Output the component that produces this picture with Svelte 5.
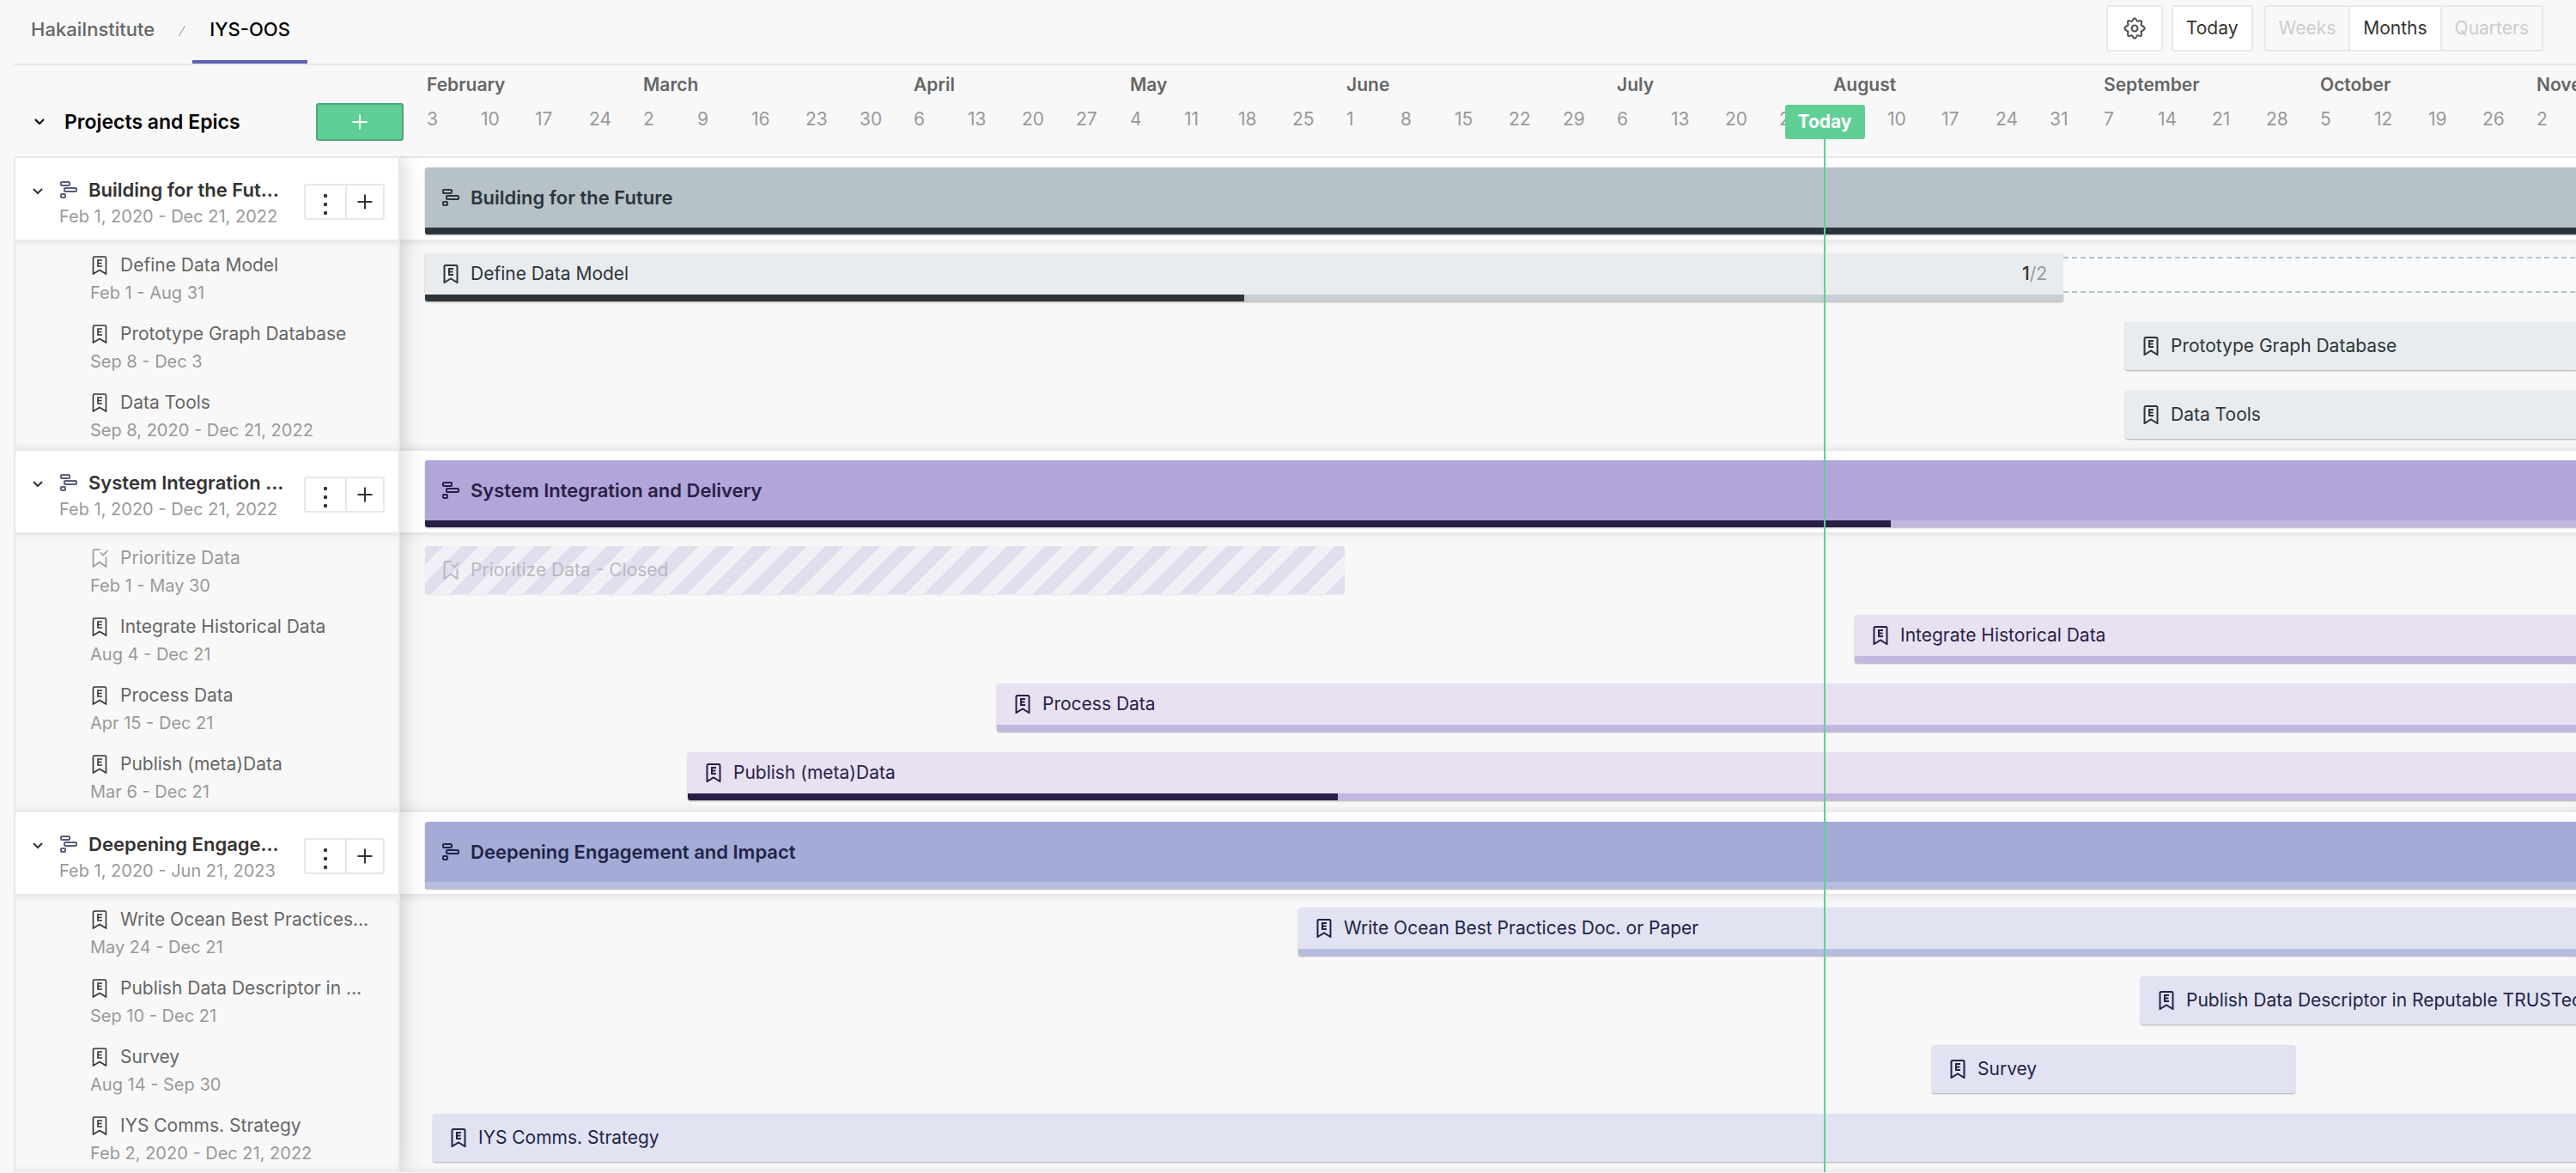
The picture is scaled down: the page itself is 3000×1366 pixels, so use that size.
<script>
  const DAY = 9;
  const LEAD = 29;
  const ORIGIN = Date.UTC(2020, 1, 1);

  const offset = (date) => LEAD + DAY * Math.round((Date.parse(date + 'T00:00:00Z') - ORIGIN) / 86400000);
  const span = (from, to) => offset(to) - offset(from);

  const months = [
    { name: 'February', weeks: [3, 10, 17, 24] },
    { name: 'March', weeks: [2, 9, 16, 23, 30] },
    { name: 'April', weeks: [6, 13, 20, 27] },
    { name: 'May', weeks: [4, 11, 18, 25] },
    { name: 'June', weeks: [1, 8, 15, 22, 29] },
    { name: 'July', weeks: [6, 13, 20, 27] },
    { name: 'August', weeks: [3, 10, 17, 24, 31] },
    { name: 'September', weeks: [7, 14, 21, 28] },
    { name: 'October', weeks: [5, 12, 19, 26] },
    { name: 'November', weeks: [2] }
  ];

  const projects = [
    {
      name: 'Building for the Future', tone: 'slate', from: '2020-02-01', to: '2022-12-21',
      dates: 'Feb 1, 2020 - Dec 21, 2022', done: 100,
      epics: [
        { name: 'Define Data Model', dates: 'Feb 1 - Aug 31', from: '2020-02-01', to: '2020-08-31', done: 50, count: [1, 2], overrun: '2022-12-21' },
        { name: 'Prototype Graph Database', dates: 'Sep 8 - Dec 3', from: '2020-09-08', to: '2020-12-03' },
        { name: 'Data Tools', dates: 'Sep 8, 2020 - Dec 21, 2022', from: '2020-09-08', to: '2022-12-21' }
      ]
    },
    {
      name: 'System Integration and Delivery', tone: 'violet', from: '2020-02-01', to: '2022-12-21',
      dates: 'Feb 1, 2020 - Dec 21, 2022', done: 18,
      epics: [
        { name: 'Prioritize Data', dates: 'Feb 1 - May 30', from: '2020-02-01', to: '2020-05-30', closed: true },
        { name: 'Integrate Historical Data', dates: 'Aug 4 - Dec 21', from: '2020-08-04', to: '2020-12-21', done: 0 },
        { name: 'Process Data', dates: 'Apr 15 - Dec 21', from: '2020-04-15', to: '2020-12-21', done: 0 },
        { name: 'Publish (meta)Data', dates: 'Mar 6 - Dec 21', from: '2020-03-06', to: '2020-12-21', done: 29 }
      ]
    },
    {
      name: 'Deepening Engagement and Impact', tone: 'blue', from: '2020-02-01', to: '2023-06-21',
      dates: 'Feb 1, 2020 - Jun 21, 2023', done: 0,
      epics: [
        { name: 'Write Ocean Best Practices Doc. or Paper', dates: 'May 24 - Dec 21', from: '2020-05-24', to: '2020-12-21', done: 0 },
        { name: 'Publish Data Descriptor in Reputable TRUSTed Repository', dates: 'Sep 10 - Dec 21', from: '2020-09-10', to: '2020-12-21' },
        { name: 'Survey', dates: 'Aug 14 - Sep 30', from: '2020-08-14', to: '2020-09-30' },
        { name: 'IYS Comms. Strategy', dates: 'Feb 2, 2020 - Dec 21, 2022', from: '2020-02-02', to: '2022-12-21' }
      ]
    }
  ];

  const scales = ['Weeks', 'Months', 'Quarters'];
  let scale = $state('Months');
</script>

{#snippet chevron()}
  <svg class="chevron" viewBox="0 0 14 10" aria-hidden="true"><path d="M2 2l5 5 5-5" /></svg>
{/snippet}

{#snippet plus()}
  <svg class="plus" viewBox="0 0 18 18" aria-hidden="true"><path d="M9 0.5v17M0.5 9h17" /></svg>
{/snippet}

{#snippet projectIcon()}
  <svg class="icon" viewBox="0 0 22 22" aria-hidden="true">
    <rect x="2" y="2" width="10" height="4" rx="1" />
    <rect x="6" y="9" width="14" height="4" rx="1" />
    <rect x="2" y="16" width="5" height="4" rx="1" />
  </svg>
{/snippet}

{#snippet epicIcon(closed)}
  <svg class="icon" viewBox="0 0 22 22" aria-hidden="true">
    {#if closed}
      <path d="M12 1H5q-1.500 0-1.500 1.500V21l7.500-5.500 7.500 5.500V9.500" />
      <path d="M12 4.500l3 3L20.500 2" />
    {:else}
      <path d="M5 1h12q1.500 0 1.500 1.500V21L11 16.500 3.500 21V2.500Q3.500 1 5 1z" />
      <path d="M14 5H9v7h5M9 8.500h4.500" />
    {/if}
  </svg>
{/snippet}

<div class="page">
  <header class="topbar">
    <nav class="crumbs" aria-label="Breadcrumb">
      <a href="#workspace">HakaiInstitute</a>
      <svg class="slash" viewBox="0 0 10 14" aria-hidden="true"><path d="M1.500 13L8.500 1" /></svg>
      <a class="current" href="#roadmap" aria-current="page">IYS-OOS</a>
    </nav>
    <div class="controls">
      <button class="control gear" aria-label="Settings">
        <svg viewBox="0 0 24 24" aria-hidden="true">
          <circle cx="12" cy="12" r="3.200" />
          <path d="M12 1.200c1.900 0 1.700 2.600 2.900 3.100 1.200.5 2.900-1.500 4.200-.1 1.400 1.400-.6 3-.1 4.200.5 1.200 3.800 1.300 3.800 3.600s-3.300 2.400-3.800 3.600c-.5 1.200 1.500 2.800.1 4.200-1.300 1.400-3-.6-4.200-.1-1.200.5-1 3.100-2.900 3.100s-1.700-2.600-2.900-3.100c-1.200-.5-2.900 1.500-4.200.1-1.400-1.400.6-3 .1-4.200-.5-1.200-3.800-1.300-3.800-3.600s3.300-2.400 3.800-3.600c.5-1.200-1.500-2.800-.1-4.200 1.300-1.400 3 .6 4.200.1 1.200-.5 1-3.100 2.900-3.100z" />
        </svg>
      </button>
      <button class="control">Today</button>
      <div class="scales" role="group" aria-label="Time scale">
        {#each scales as s}
          <button class:active={scale === s} aria-pressed={scale === s} onclick={() => (scale = s)}>{s}</button>
        {/each}
      </div>
    </div>
  </header>

  <main class="roadmap">
    <section class="side">
      <div class="side-head">
        <button class="toggle" aria-label="Collapse all">{@render chevron()}</button>
        <h1>Projects and Epics</h1>
        <button class="add" aria-label="Add project">{@render plus()}</button>
      </div>
      <div class="panel">
        {#each projects as p}
          <div class="project">
            <button class="toggle" aria-label="Collapse {p.name}">{@render chevron()}</button>
            <div class="project-text">
              <h2>{@render projectIcon()}<span>{p.name}</span></h2>
              <p>{p.dates}</p>
            </div>
            <div class="actions">
              <button aria-label="More actions">
                <svg class="dots" viewBox="0 0 6 26" aria-hidden="true"><circle cx="3" cy="3" r="2.200" /><circle cx="3" cy="13" r="2.200" /><circle cx="3" cy="23" r="2.200" /></svg>
              </button>
              <button aria-label="Add epic">{@render plus()}</button>
            </div>
          </div>
          <ul class="epics">
            {#each p.epics as e}
              <li class="epic" class:closed={e.closed}>
                <h3>{@render epicIcon(e.closed)}<span>{e.name}</span></h3>
                <p>{e.dates}</p>
              </li>
            {/each}
          </ul>
        {/each}
      </div>
    </section>

    <section class="timeline">
      <div class="scale-head">
        {#each months as m}
          <div class="month">
            <strong>{m.name}</strong>
            <div class="weeks">
              {#each m.weeks as w}<span>{w}</span>{/each}
            </div>
          </div>
        {/each}
      </div>
      {#each projects as p}
        <div class="lane project-lane {p.tone}">
          <div class="bar" style:margin-left="{offset(p.from)}px" style:width="{span(p.from, p.to)}px">
            <div class="label">{@render projectIcon()}<span>{p.name}</span></div>
            <div class="track"><div class="fill" style:width="{p.done}%"></div></div>
          </div>
        </div>
        <div class="epic-lanes {p.tone}">
          {#each p.epics as e}
            <div class="lane">
              <div class="bar" class:closed={e.closed} style:margin-left="{offset(e.from)}px" style:width="{span(e.from, e.to)}px">
                <div class="label">
                  {@render epicIcon(e.closed)}<span>{e.name}{e.closed ? ' - Closed' : ''}</span>
                  {#if e.count}<span class="count"><b>{e.count[0]}</b>/{e.count[1]}</span>{/if}
                </div>
                {#if e.done !== undefined}
                  <div class="track"><div class="fill" style:width="{e.done}%"></div></div>
                {/if}
              </div>
              {#if e.overrun}<div class="overrun" style:width="{span(e.to, e.overrun)}px"></div>{/if}
            </div>
          {/each}
        </div>
      {/each}
      <div class="today" style:left="{offset('2020-07-31')}px"><span>Today</span></div>
    </section>
  </main>
</div>

<style>
  :global(body) { background: #f8f8f8; }
  .page {
    padding-left: 16px;
    font-family: Inter, sans-serif;
    font-size: 21px;
    line-height: 28px;
    color: #333;
    overflow: hidden;
  }
  h1, h2, h3, p, ul { margin: 0; padding: 0; font-size: inherit; }
  button { font: inherit; color: inherit; background: none; border: 0; padding: 0; margin: 0; cursor: pointer; }
  svg { display: block; fill: none; stroke: currentColor; stroke-width: 2; flex: none; }

  .topbar { display: flex; justify-content: space-between; height: 74px; border-bottom: 2px solid #e8e8e8; }
  .crumbs { display: flex; align-items: stretch; padding-left: 20px; font-size: 22px; font-weight: 500; }
  .crumbs a { color: #666; text-decoration: none; line-height: 68px; }
  .crumbs .current { box-sizing: border-box; padding: 0 20px; color: #000; border-bottom: 4px solid #5e63b6; }
  .slash { width: 10px; height: 14px; margin: 29px 7px 0 27px; color: #888; stroke-width: 1; }
  .controls { display: flex; align-items: flex-start; gap: 10px; padding: 6px 38px 0 0; }
  .control, .scales { box-sizing: border-box; height: 54px; border: 2px solid #e8e8e8; border-radius: 3px; background: #fff; }
  .control { padding: 0 15px; }
  .gear { width: 66px; padding: 0 18px; color: #555; }
  .gear svg { width: 26px; height: 26px; }
  .scales { display: flex; margin-left: 3px; background: #f8f8f8; color: #ccc; }
  .scales button { padding: 0 15px; }
  .scales button + button { border-left: 2px solid #e8e8e8; }
  .scales .active { background: #fff; color: #333; }

  .roadmap { display: flex; }
  .side { flex: none; width: 450px; position: relative; z-index: 2; }
  .side-head { display: flex; align-items: center; box-sizing: border-box; height: 106px; padding-top: 26px; }
  .side-head .toggle { margin: 0 22px 0 23px; color: #000; }
  h1 { flex: 1; font-size: 23px; font-weight: 600; color: #000; }
  .add {
    display: flex; align-items: center; justify-content: center; box-sizing: border-box;
    width: 102px; height: 44px; margin-right: -4px; position: relative; z-index: 1;
    background: #5fcf96; border: 2px solid #4ca77a; border-radius: 3px; color: #fff;
  }
  .chevron { width: 14px; height: 10px; }
  .plus { width: 18px; height: 18px; }
  .icon { width: 22px; height: 22px; }

  .panel { border: 0 solid #e8e8e8; border-width: 0 2px; box-shadow: 4px 0 24px rgba(0, 0, 0, .16); clip-path: inset(0 -40px 0 0); }
  .project {
    display: flex; align-items: center; box-sizing: border-box; height: 99px;
    background: #fff; border: 2px solid #e8e8e8; border-width: 2px 0; padding: 0 16px 0 19px;
  }
  .project .toggle { margin: 0 18px 18px 0; }
  .project-text { flex: 1; min-width: 0; padding-top: 8px; }
  h2 { display: flex; align-items: center; gap: 12px; height: 32px; font-size: 22px; font-weight: 600; color: #333; }
  h2 .icon { color: #5b5c7e; }
  h2 span, h3 span { overflow: hidden; text-overflow: ellipsis; white-space: nowrap; }
  h2 span { width: 228px; }
  h3 span { width: 291px; }
  p { font-size: 20px; line-height: 30px; color: #999; white-space: nowrap; }
  .actions { display: flex; flex: none; margin-top: 6px; border: 2px solid #e8e8e8; border-radius: 3px; }
  .actions button { display: flex; align-items: center; justify-content: center; box-sizing: border-box; width: 42px; height: 38px; }
  .actions button:first-child { width: 48px; border-right: 2px solid #e8e8e8; }
  .dots { width: 6px; height: 26px; margin-top: 7px; fill: currentColor; stroke: none; }

  .epics { list-style: none; padding: 2px 0 0; box-shadow: inset 0 8px 12px -8px rgba(0, 0, 0, .1), inset 0 -8px 12px -8px rgba(0, 0, 0, .1); background: #f8f8f8; }
  .epic { box-sizing: border-box; height: 80px; padding: 10px 0 0 87px; }
  .epic h3 { display: flex; align-items: center; gap: 13px; height: 32px; font-weight: 400; color: #666; }
  .epic p { line-height: 32px; }
  .epic .icon { color: #333; stroke-width: 1.6; }
  .epic.closed h3, .epic.closed .icon { color: #999; }

  .timeline { position: relative; flex: 1; min-width: 0; overflow: hidden; }
  .scale-head { display: flex; box-sizing: border-box; height: 106px; padding: 7px 0 0 31px; }
  .month { flex: none; }
  .month strong { display: block; line-height: 32px; margin-bottom: 10px; font-weight: 600; color: #666; }
  .weeks { display: flex; }
  .weeks span { width: 63px; color: #999; }

  .lane { display: flex; box-sizing: border-box; height: 80px; padding-top: 12px; white-space: nowrap; }
  .project-lane { height: 99px; background: #fff; border: 2px solid #e8e8e8; border-width: 2px 0; padding-top: 11px; }
  .epic-lanes { padding: 2px 0 0; box-shadow: inset 0 8px 12px -8px rgba(0, 0, 0, .1), inset 0 -8px 12px -8px rgba(0, 0, 0, .1); }
  .bar {
    display: flex; flex-direction: column; flex: none; box-sizing: border-box; height: 56px;
    border-radius: 3px; overflow: hidden; background: var(--pale); color: var(--ink);
    box-shadow: 0 1px 2px rgba(0, 0, 0, .3);
  }
  .project-lane .bar { height: 78px; background: var(--strong); }
  .label { display: flex; flex: 1; align-items: center; gap: 12px; padding: 0 19px; }
  .project-lane .label { font-size: 22px; font-weight: 600; }
  .count { margin-left: auto; color: #999; }
  .count b { color: #333; font-weight: 500; }
  .track { height: 8px; background: var(--track); }
  .fill { height: 100%; background: var(--ink); }
  .overrun { flex: none; box-sizing: border-box; height: 42px; margin-top: 4px; background: #f9fafc; border: 2px dashed #b7c2c7; border-width: 2px 0; }
  .bar.closed {
    color: #bbb8c2; box-shadow: 0 1px 2px rgba(0, 0, 0, .08);
    background: repeating-linear-gradient(135deg, #e1deed 0 15px, #f2f0f6 15px 30px);
  }

  .slate { --strong: #b7c2c8; --pale: #e8ecee; --track: #c6cfd3; --ink: #2d353b; }
  .violet { --strong: #b2a5d9; --pale: #e8e1f1; --track: #c2b7e0; --ink: #2a1f47; }
  .blue { --strong: #a4abd7; --pale: #e1e3f2; --track: #b6bce0; --ink: #1f2447; }

  .today { position: absolute; top: 46px; bottom: 0; width: 2px; display: flex; justify-content: center; align-items: flex-start; background: #5fcf96; }
  .today span { flex: none; padding: 0 15px; line-height: 40px; border-radius: 3px; background: #5fcf96; color: #fff; font-weight: 700; }
</style>
